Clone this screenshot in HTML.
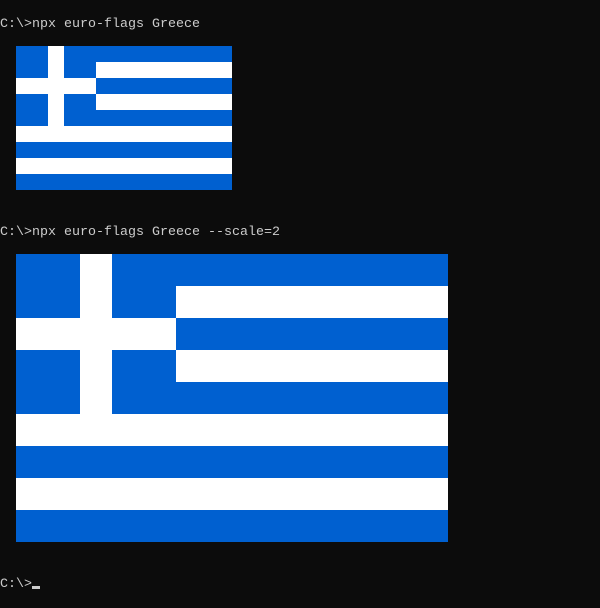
<!DOCTYPE html><html><head><style>
body{margin:0;width:600px;height:608px;background:#0c0c0c;position:relative;overflow:hidden}
.t{position:absolute;left:0;font:13.33px "Liberation Mono",monospace;color:#cccccc;white-space:pre;line-height:16px}
.b{position:absolute}
</style></head><body>
<div class="t" style="top:17px">C:\&gt;npx euro-flags Greece</div>
<div class="t" style="top:225px">C:\&gt;npx euro-flags Greece --scale=2</div>
<div class="t" style="top:577px">C:\&gt;</div>
<div class="b" style="left:32px;top:586px;width:8px;height:3px;background:#ccc"></div>
<svg class="b" style="left:16px;top:46px" width="216" height="144" viewBox="0 0 27 18">
<rect width="27" height="18" fill="#0060d0"/>
<g fill="#fff"><rect y="2" width="27" height="2"/><rect y="6" width="27" height="2"/><rect y="10" width="27" height="2"/><rect y="14" width="27" height="2"/></g>
<rect width="10" height="10" fill="#0060d0"/>
<g fill="#fff"><rect x="4" width="2" height="10"/><rect y="4" width="10" height="2"/></g>
</svg>
<svg class="b" style="left:16px;top:254px" width="432" height="288" viewBox="0 0 27 18">
<rect width="27" height="18" fill="#0060d0"/>
<g fill="#fff"><rect y="2" width="27" height="2"/><rect y="6" width="27" height="2"/><rect y="10" width="27" height="2"/><rect y="14" width="27" height="2"/></g>
<rect width="10" height="10" fill="#0060d0"/>
<g fill="#fff"><rect x="4" width="2" height="10"/><rect y="4" width="10" height="2"/></g>
</svg>
</body></html>
